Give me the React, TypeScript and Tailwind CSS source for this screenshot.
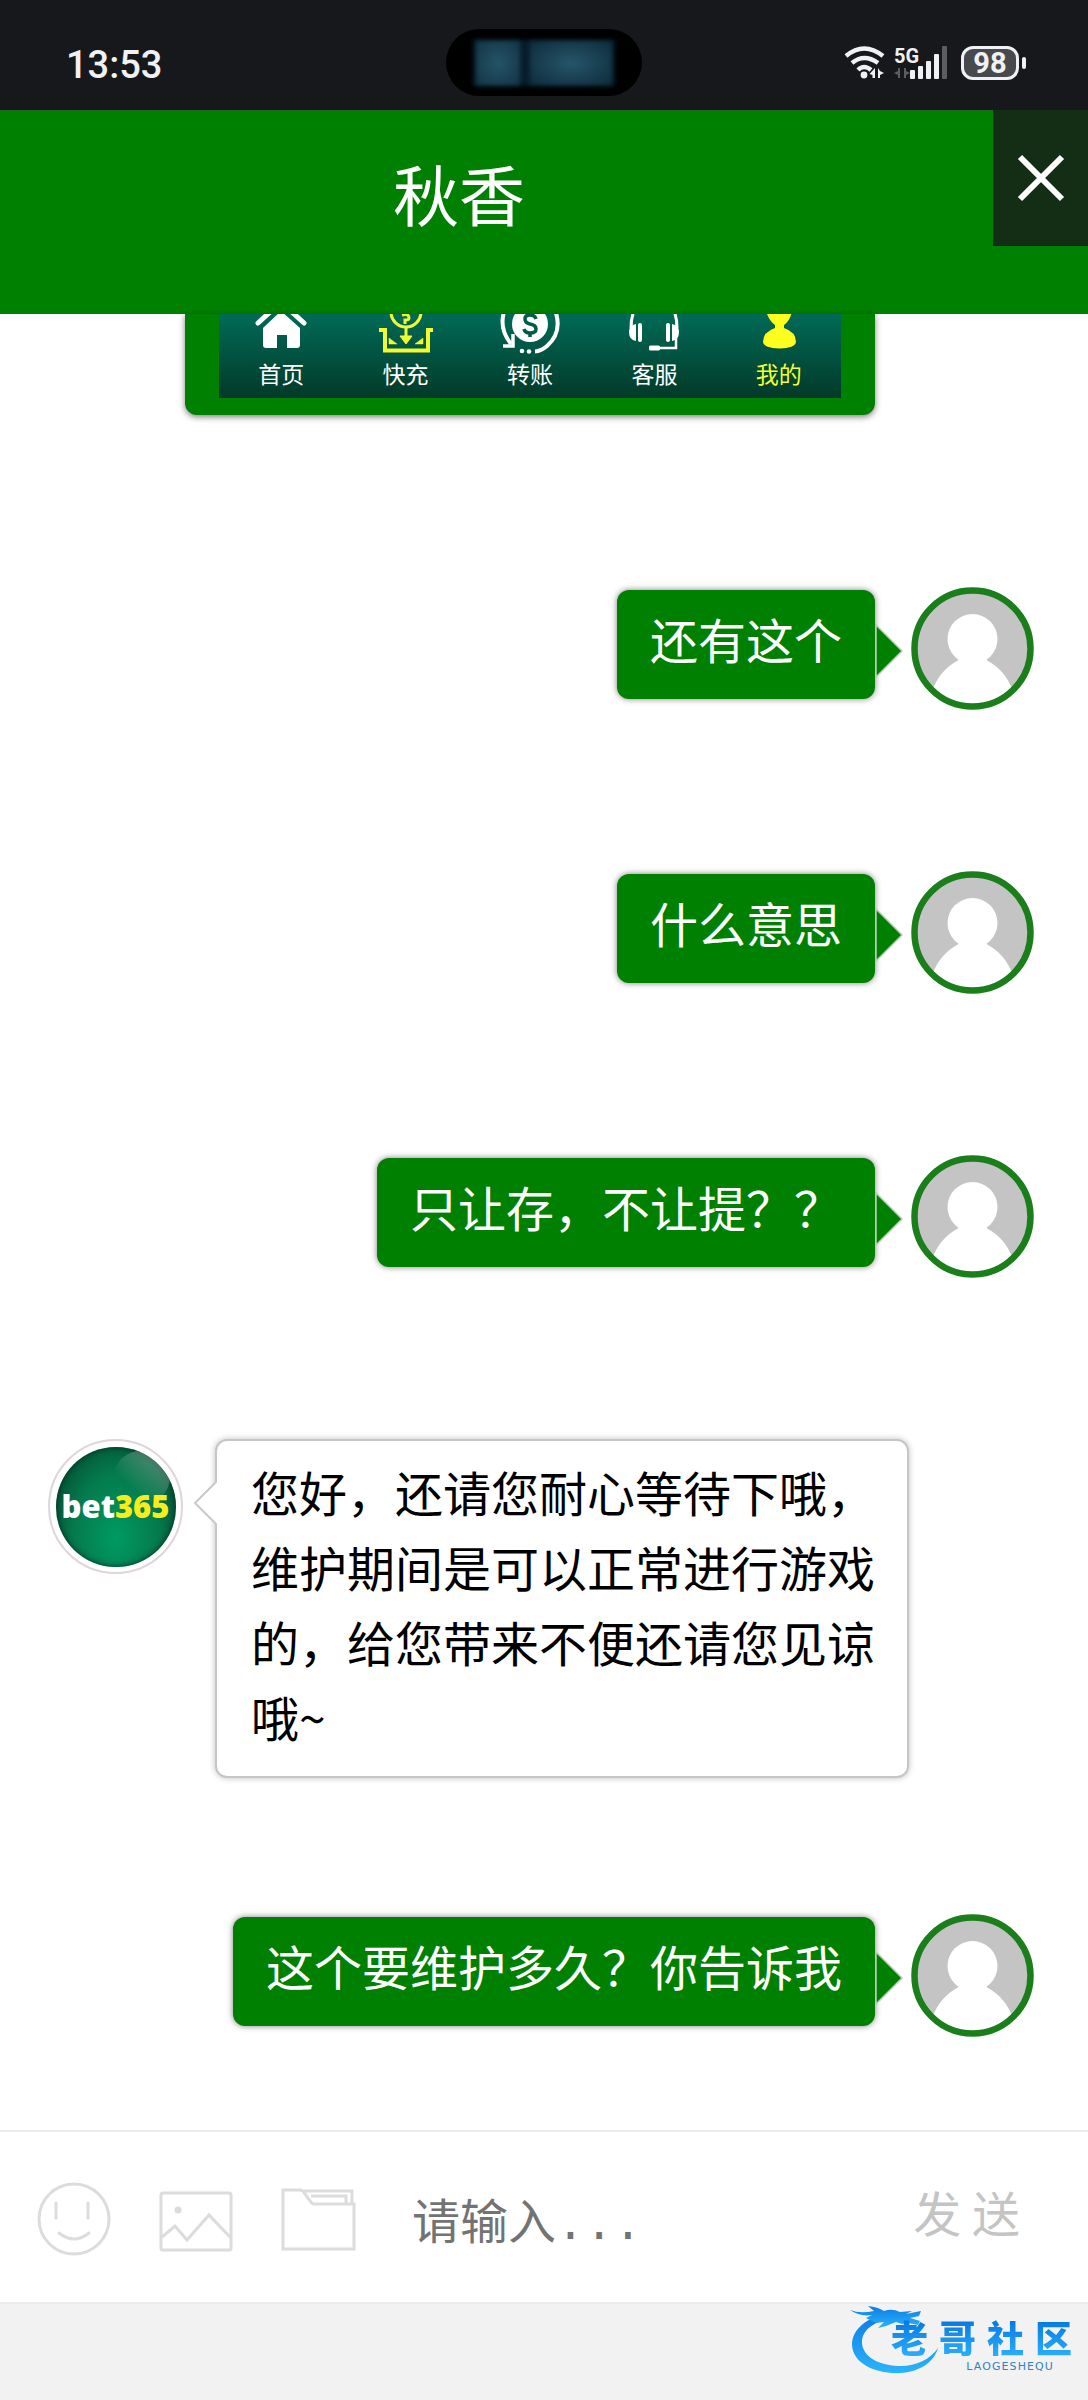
import type { ReactNode } from "react";

function StatusBar() {
  return (
    <div className="relative flex h-[110px] items-center justify-between bg-[#17181b] pl-[66px] pr-[62px] pt-4">
      <span className="pt-1 font-['Roboto'] text-[38px] font-medium leading-none text-[#f0f1f4]">13:53</span>
      <div className="absolute left-1/2 top-[29px] flex h-[67px] w-[196px] -translate-x-1/2 items-center justify-center rounded-full bg-black">
        <div className="flex h-[46px] w-[142px] bg-[#051a26] px-[3px] blur-[2px]">
          <div className="h-full w-[44px] bg-radial from-[#255468] to-[#123444]" />
          <div className="h-full w-[10px] bg-[#071d2c]" />
          <div className="h-full flex-1 bg-radial from-[#26566a] to-[#0d2b3a]" />
        </div>
      </div>
      <div className="flex items-center text-[#f0f1f4]">
        <svg width="42" height="34" viewBox="0 0 42 34" fill="none" stroke="currentColor" strokeWidth="4.5" aria-label="Wi-Fi">
          <path d="M2 10Q20 -5 39 10" />
          <path d="M8 17Q20 7 34 17" />
          <path d="M14 24Q20 18 27 24" />
          <circle cx="20" cy="29" r="3.4" fill="currentColor" stroke="none" />
          <path d="M31 22v10h-2.5v-3l-3-1zM34 22v10h2v-3l4-2-4-2z" fill="currentColor" stroke="none" />
        </svg>
        <div className="relative ml-2">
          <span className="absolute left-0 top-[-2px] font-['Roboto'] text-[20px] font-bold leading-6">5G</span>
          <svg width="56" height="34" viewBox="0 0 56 34" aria-label="信号">
            <path d="M6 22v10H4v-3l-4-2 4-2v-3zM10 22v10h2v-3l4-2-4-2v-3z" fill="#5c5d60" />
            <rect x="16" y="24" width="5" height="9" rx="1" fill="currentColor" />
            <rect x="24" y="20" width="5" height="13" rx="1" fill="currentColor" />
            <rect x="32" y="15" width="5" height="18" rx="1" fill="currentColor" />
            <rect x="40" y="8" width="5" height="25" rx="1" fill="currentColor" />
            <rect x="48" y="0" width="5" height="33" rx="1" fill="#5c5d60" />
          </svg>
        </div>
        <div className="ml-[11px] flex h-[34px] w-[58px] items-center justify-center rounded-xl border-[3px] border-current bg-[#48494c] font-['Roboto'] text-[29px] font-bold leading-none">
          98
        </div>
        <div className="ml-[3px] h-3 w-1 rounded-sm bg-current" />
      </div>
    </div>
  );
}

function Header() {
  return (
    <header className="flex h-[204px] items-start bg-[#008000] shadow-[inset_0_1px_0_#1f6b1f]">
      <h1 className="flex-1 pr-[75px] pt-[34px] text-center text-[66px] font-normal leading-[96px] text-white">秋香</h1>
      <button type="button" aria-label="关闭" className="flex h-[136px] w-[95px] items-center justify-center bg-[#142e16]">
        <svg width="48" height="48" viewBox="0 0 48 48" stroke="white" strokeWidth="6">
          <path d="M3 3L45 45M45 3L3 45" />
        </svg>
      </button>
    </header>
  );
}

const tabs: { label: string; active?: boolean; iconColor: string; icon: ReactNode }[] = [
  {
    label: "首页",
    iconColor: "text-white",
    icon: (
      <>
        <path d="M7 9L30 -12L53 9" fill="none" stroke="currentColor" strokeWidth="5" strokeLinecap="round" />
        <path d="M30 -3L49 14V31Q49 34 46 34H36V21H26V34H15Q12 34 12 31V14Z" fill="currentColor" />
      </>
    ),
  },
  {
    label: "快充",
    iconColor: "text-[#f0fa2e]",
    icon: (
      <g fill="none" stroke="currentColor" strokeWidth="3">
        <circle cx="30" cy="-2" r="15" />
        <path d="M3 16H9V36.500H52V16H57" strokeWidth="4" />
        <path d="M26 1Q33 -1 33 4Q33 6 29 6V10" />
        <path d="M30 14V27" />
        <path d="M24 22L30 30L36 22Z" fill="currentColor" strokeWidth="1" />
        <path d="M13 24L21 30H13ZM47 24L39 30H47Z" fill="currentColor" strokeWidth="0.500" />
      </g>
    ),
  },
  {
    label: "转账",
    iconColor: "text-white",
    icon: (
      <>
        <circle cx="30" cy="10" r="18" fill="currentColor" />
        <g fill="none" stroke="#035c49" strokeWidth="3.500">
          <path d="M36 5Q35 1 30 1Q25 1 25 5Q25 9 30 10Q36 11 36 15Q36 19 30 19Q25 19 24 15" />
          <path d="M30 -3V2M30 18V23" />
        </g>
        <g fill="none" stroke="currentColor" strokeWidth="4">
          <path d="M4 -2Q-1 15 11 30" />
          <path d="M3 32H13V20" strokeWidth="3.500" />
          <path d="M55 -4Q63 18 47 32Q41 37 35 37.500" />
        </g>
        <circle cx="22" cy="37" r="2.300" fill="currentColor" />
        <circle cx="29" cy="37.500" r="2.300" fill="currentColor" />
      </>
    ),
  },
  {
    label: "客服",
    iconColor: "text-white",
    icon: (
      <>
        <g fill="none" stroke="currentColor" strokeWidth="3">
          <path d="M7 14Q7 4 10 -3" />
          <path d="M53 14Q53 4 50 -3" />
          <path d="M52 24V34H34" strokeWidth="2.500" />
        </g>
        <path d="M12 10V27Q5 26 5 18Q5 11 12 10ZM48 10V27Q55 26 55 18Q55 11 48 10Z" fill="currentColor" />
        <rect x="14" y="9" width="4" height="19" rx="2" fill="currentColor" />
        <rect x="42" y="9" width="4" height="19" rx="2" fill="currentColor" />
        <rect x="25" y="31.500" width="11" height="5" rx="1.500" fill="currentColor" />
      </>
    ),
  },
  {
    label: "我的",
    active: true,
    iconColor: "text-[#ffff1f]",
    icon: (
      <path
        d="M17 -4H43Q42 6 35 11V14Q47 18 47 28Q46 34 30.500 34.500Q15 34 14 28Q14 18 26 14V11Q19 6 17 -4Z"
        fill="currentColor"
      />
    ),
  },
];

function PictureMessage() {
  return (
    <div className="pb-9 pl-[185px] pr-[213px]">
      <div className="rounded-b-xl bg-[#008000] px-[34px] pb-[17px] shadow-[0_2px_6px_rgba(0,0,0,0.5)]">
        <div className="grid h-[84px] grid-cols-5 bg-linear-to-b from-[#006b57] to-[#023a29]">
          {tabs.map((tab) => (
            <div key={tab.label} className="flex flex-col items-center">
              <svg className={tab.iconColor} width="60" height="42" viewBox="0 0 60 42">
                {tab.icon}
              </svg>
              <span className={tab.active ? "text-[23px] leading-[34px] text-[#f4ff2e]" : "text-[23px] leading-[34px] text-white"}>
                {tab.label}
              </span>
            </div>
          ))}
        </div>
      </div>
    </div>
  );
}

function UserAvatar() {
  return (
    <svg className="shrink-0" width="123" height="123" viewBox="0 0 123 123" role="img" aria-label="我">
      <defs>
        <clipPath id="face">
          <circle cx="61.500" cy="61.500" r="55.500" />
        </clipPath>
      </defs>
      <circle cx="61.500" cy="61.500" r="56" fill="#c5c4c5" />
      <g clipPath="url(#face)" fill="white">
        <circle cx="61.500" cy="52" r="25" />
        <path d="M47 66Q49 72 46 74Q29 83 21 104V123H102V104Q94 83 77 74Q74 72 76 66Z" />
      </g>
      <circle cx="61.500" cy="61.500" r="58" fill="none" stroke="#1a7f1a" strokeWidth="6.500" />
    </svg>
  );
}

function AgentAvatar() {
  return (
    <div className="flex size-[135px] shrink-0 items-center justify-center rounded-full border-2 border-[#dfd5da] bg-white">
      <div className="relative flex size-[120px] items-center justify-center overflow-hidden rounded-full bg-radial-[at_50%_75%] from-[#009a62] via-[#047a4d] to-[#023d29] shadow-[inset_0_0_6px_#012c1e]">
        <div className="absolute left-[58px] top-[4px] h-[52px] w-[56px] rounded-full bg-linear-to-bl from-white/40 to-transparent to-70%" />
        <span className="relative font-['Open_Sans'] text-[31px] font-extrabold leading-none text-white">
          bet<span className="text-[#f9ec1c]">365</span>
        </span>
      </div>
    </div>
  );
}

function SentMessage({ children }: { children: ReactNode }) {
  return (
    <div className="flex min-h-[148px] items-start justify-end gap-9 pl-[48px] pr-[54px]">
      <div className="relative mt-[3px] rounded-xl bg-[#008000] px-[33px] pb-[23px] pt-[11px] text-[48px] leading-[75px] text-white shadow-[0_0_6px_rgba(0,0,0,0.5)]">
        {children}
        <svg className="absolute left-full top-[34px]" width="29" height="54" viewBox="0 0 29 54">
          <path d="M1 1L27 27L1 53Z" fill="#008000" stroke="#b9cbb9" strokeWidth="1.500" />
        </svg>
      </div>
      <UserAvatar />
    </div>
  );
}

function ReceivedMessage({ children }: { children: ReactNode }) {
  return (
    <div className="flex min-h-[148px] items-start gap-8 pl-[48px] pr-[179px]">
      <AgentAvatar />
      <div className="relative flex-1 rounded-xl border-2 border-[#c6c6c6] bg-white pb-[22px] pl-[34px] pr-[30px] pt-[13px] text-[48px] leading-[75px] text-black shadow-[0_0_6px_rgba(0,0,0,0.25)]">
        {children}
        <svg className="absolute right-full top-[39px]" width="24" height="46" viewBox="0 0 24 46">
          <path d="M24 1L2 23L24 45" fill="white" stroke="#c9c9c9" strokeWidth="2" />
        </svg>
      </div>
    </div>
  );
}

function Composer() {
  return (
    <form className="flex h-[174px] items-center border-y-2 border-[#ebebeb] bg-white pl-[37px] pr-[68px]" onSubmit={(e) => e.preventDefault()}>
      <div className="flex shrink-0 items-center gap-12 pt-1 text-[#dcdcdc]">
        <button type="button" aria-label="表情">
          <svg width="74" height="74" viewBox="0 0 74 74" fill="none" stroke="currentColor" strokeWidth="3">
            <circle cx="37" cy="37" r="35" />
            <path d="M19 21V36M51 21V36M22 51Q37 63 52 51" strokeLinecap="round" />
          </svg>
        </button>
        <button type="button" aria-label="图片">
          <svg width="74" height="74" viewBox="0 0 74 74" fill="none" stroke="currentColor" strokeWidth="3">
            <rect x="2" y="11" width="70" height="57" rx="2" />
            <path d="M3 55L16 44L28 58L50 33L71 55" />
            <circle cx="19" cy="28" r="2" fill="currentColor" />
          </svg>
        </button>
        <button type="button" aria-label="文件">
          <svg width="76" height="74" viewBox="0 0 76 74" fill="none" stroke="currentColor" strokeWidth="3">
            <path d="M2 8H19Q22 8 24 12L30 20Q31 22 34 22H73V67H2Z" />
            <path d="M23 9H71V22M30 14H65V21" />
          </svg>
        </button>
      </div>
      <input
        type="text"
        aria-label="消息"
        placeholder="请输入..."
        className="ml-[55px] h-28 min-w-0 flex-1 bg-transparent pt-[18px] font-['Liberation_Mono','Noto_Sans_CJK_SC',monospace] text-[48px] text-[#333333] outline-none placeholder:text-[#737373]"
      />
      <button type="submit" className="mb-3 shrink-0 text-[48px] leading-[70px] text-[#c4c4c4]">
        发 送
      </button>
    </form>
  );
}

function CommunityLogo() {
  return (
    <div className="relative flex h-[68px] w-[222px] flex-col items-end">
      <svg className="absolute left-0 top-0" width="100" height="68" viewBox="0 0 100 68" role="img" aria-label="龙">
        <defs>
          <linearGradient id="dragon" x1="0" y1="0" x2="0" y2="1">
            <stop offset="0" stopColor="#0b7ce6" />
            <stop offset="1" stopColor="#2bb4fa" />
          </linearGradient>
        </defs>
        <g fill="url(#dragon)">
          <path d="M34 8C12 14 2 26 2 39C3 57 24 68 50 67C70 66 84 56 88 42C80 54 64 61 48 60C27 59 13 50 12 37C11 27 20 18 34 14Z" />
          <path d="M0 4Q10 8 24 5L18 0Q28 1 34 5Q42 2 50 6L62 5L56 8L71 5L69 10L60 12L70 15L68 19L58 17L52 18L46 16L36 20L28 22L34 16L26 17L16 12L22 9Q10 11 0 4Z" />
        </g>
      </svg>
      <div className="relative mt-3 flex w-[181px] justify-between bg-linear-to-b from-[#0575e0] to-[#2aaefa] bg-clip-text text-[37px] font-black leading-[38px] text-transparent">
        <span>老</span>
        <span>哥</span>
        <span>社</span>
        <span>区</span>
      </div>
      <span className="relative mr-[18px] mt-1 font-['DejaVu_Sans'] text-[11px] leading-[14px] tracking-widest text-[#2f83c9]">LAOGESHEQU</span>
    </div>
  );
}

export default function App() {
  return (
    <div className="flex min-h-screen flex-col bg-white font-['Noto_Sans_CJK_SC',sans-serif]">
      <StatusBar />
      <Header />
      <main className="flex flex-1 flex-col gap-[136px] pb-[68px]">
        <PictureMessage />
        <SentMessage>还有这个</SentMessage>
        <SentMessage>什么意思</SentMessage>
        <SentMessage>只让存，不让提？？</SentMessage>
        <ReceivedMessage>您好，还请您耐心等待下哦，维护期间是可以正常进行游戏的，给您带来不便还请您见谅哦~</ReceivedMessage>
        <SentMessage>这个要维护多久？你告诉我</SentMessage>
      </main>
      <Composer />
      <footer className="flex h-24 items-start justify-end bg-[#f2f2f2] pr-[16px] pt-[2px]">
        <CommunityLogo />
      </footer>
    </div>
  );
}
